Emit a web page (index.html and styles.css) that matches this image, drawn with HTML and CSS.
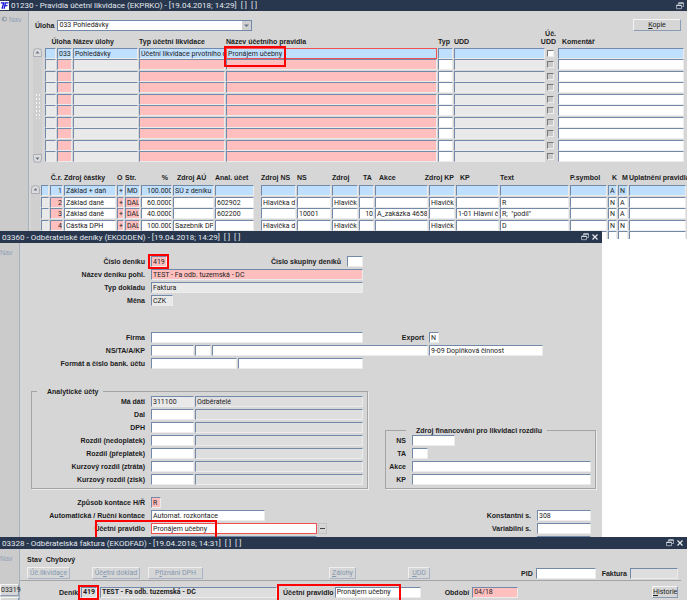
FILE: index.html
```html
<!DOCTYPE html>
<html lang="cs">
<head>
    <meta charset="utf-8">
    <title>Pravidla účetní likvidace</title>
    <link rel="stylesheet" href="styles.css">
</head>
<body>
    <svg class="defs" aria-hidden="true">
        <symbol id="icon-restore" viewBox="0 0 8 8">
            <path d="M2.500 2.500V1h5v3.500H5.800M.5 3.300h5v3.400h-5z" fill="none" stroke="#b4bcc9" stroke-width=".8"/>
            <path d="M2.500 1h5M.5 3.300h5" stroke="#e6eaf0"/>
        </symbol>
        <symbol id="icon-close" viewBox="0 0 8 8">
            <path d="M1.500 1.500l5 5M6.500 1.500l-5 5" stroke="#e6eaf0" stroke-width="1.200"/>
        </symbol>
        <symbol id="icon-up" viewBox="0 0 9 9">
            <path d="M.5 8.500V4a4 3.500 0 0 1 8 0v4.500z" fill="#dcdcdc" stroke="#a9aeb6"/>
            <path d="M2.500 5.500h4l-2-2.500z" fill="#66758c"/>
        </symbol>
        <symbol id="icon-down" viewBox="0 0 9 9">
            <path d="M.5.5V5a4 3.500 0 0 0 8 0V.5z" fill="#dcdcdc" stroke="#a9aeb6"/>
            <path d="M2.500 3.500h4l-2 2.500z" fill="#66758c"/>
        </symbol>
    </svg>

    <!-- Pravidla účetní likvidace -->
    <section class="window rules">
        <header class="titlebar">
            <svg class="logo" viewBox="0 0 9 9" aria-hidden="true">
                <rect width="9" height="9" fill="#fff"/>
                <path d="M.8 1.800h3L2 7.800M4 7.800l1.500-6h3M4.800 4.600h2.700" fill="none" stroke="#1414d8" stroke-width="1.300"/>
            </svg>
            <h1>01230 - Pravidla účetní likvidace (EKPRKO) - [19.04.2018; 14:29]&nbsp; [ ]&nbsp; [ ]</h1>
            <svg class="win-icon" aria-hidden="true"><use href="#icon-restore"/></svg>
        </header>
        <div class="window-body">
            <nav class="side wide">
                <svg class="nav-icon" viewBox="0 0 6 6" aria-hidden="true">
                    <circle cx="3" cy="3" r="2.500" fill="#a3a9b3"/>
                    <path d="M2.500 1.800h3v2.500h-3z" fill="#d5d9df" stroke="#838b98" stroke-width=".6"/>
                </svg>
                <span>Nav</span>
            </nav>
            <main class="rules-main">
                <div class="toolbar">
                    <label for="uloha">Úloha</label>
                    <div class="combo">
                        <select id="uloha"><option>033 Pohledávky</option></select>
                        <svg viewBox="0 0 9 9" aria-hidden="true"><path d="M2 3.500h5l-2.500 2.500z" fill="#66758c"/></svg>
                    </div>
                    <button class="btn kopie"><u>K</u>opie</button>
                </div>

                <div class="grid-wrap">
                    <div class="scroll">
                        <svg aria-hidden="true"><use href="#icon-up"/></svg>
                        <div class="grip"></div>
                        <svg aria-hidden="true"><use href="#icon-down"/></svg>
                    </div>
                    <table class="grid" id="rules-grid">
                        <colgroup>
                            <col class="w12"><col class="w16"><col class="w66"><col class="w87"><col class="w212">
                            <col class="w16"><col class="w92"><col class="w12"><col>
                        </colgroup>
                        <thead>
                            <tr>
                                <th></th>
                                <th class="right"><bdi>Úloha</bdi></th>
                                <th>Název úlohy</th>
                                <th>Typ účetní likvidace</th>
                                <th>Název účetního pravidla</th>
                                <th>Typ</th>
                                <th>UDD</th>
                                <th class="right"><bdi>Úč.</bdi><br><bdi>UDD</bdi></th>
                                <th class="indent">Komentář</th>
                            </tr>
                        </thead>
                        <tbody></tbody>
                    </table>
                </div>

                <div class="grid-wrap lower">
                    <div class="scroll">
                        <svg aria-hidden="true"><use href="#icon-up"/></svg>
                    </div>
                    <table class="grid" id="items-grid">
                        <colgroup>
                            <col class="w9"><col class="w14"><col class="w53"><col class="w8"><col class="w16"><col class="w32">
                            <col class="w42"><col class="w46"><col class="w36"><col class="w35"><col class="w27"><col class="w16">
                            <col class="w54"><col class="w27"><col class="w44"><col class="w70"><col class="w38"><col class="w10">
                            <col class="w11"><col>
                        </colgroup>
                        <thead>
                            <tr>
                                <th></th>
                                <th class="right"><bdi>Č.r.</bdi></th>
                                <th>Zdroj částky</th>
                                <th>O</th>
                                <th>Str.</th>
                                <th class="right pct">%</th>
                                <th class="indent">Zdroj AÚ</th>
                                <th>Anal. účet</th>
                                <th>Zdroj NS</th>
                                <th>NS</th>
                                <th>Zdroj</th>
                                <th class="indent">TA</th>
                                <th class="indent">Akce</th>
                                <th class="right"><bdi>Zdroj KP</bdi></th>
                                <th class="indent">KP</th>
                                <th>Text</th>
                                <th>P.symbol</th>
                                <th class="indent">K</th>
                                <th class="indent">M</th>
                                <th>Uplatnění pravidla</th>
                            </tr>
                        </thead>
                        <tbody></tbody>
                    </table>
                </div>
            </main>
        </div>
    </section>

    <!-- Odběratelské deníky -->
    <section class="window journals">
        <header class="titlebar">
            <h2>03360 - Odběratelské deníky (EKODDEN) - [19.04.2018; 14:29]&nbsp; [ ]&nbsp; [ ]</h2>
            <svg class="win-icon" aria-hidden="true"><use href="#icon-restore"/></svg>
            <svg class="win-icon" aria-hidden="true"><use href="#icon-close"/></svg>
        </header>
        <div class="window-body">
            <nav class="side"><span>Nav</span></nav>
            <div class="journals-main">
                <div class="rows">
                    <div class="row">
                        <label for="cislo">Číslo deníku</label>
                        <span class="marked mark-code"><input id="cislo" class="w16 req" value="419"></span>
                        <label class="group-label" for="skupina">Číslo skupiny deníků</label>
                        <input id="skupina" class="w16">
                    </div>
                    <div class="row">
                        <label for="nazev">Název deníku pohl.</label>
                        <input id="nazev" class="w212 req" value="TEST - Fa odb. tuzemská - DČ">
                    </div>
                    <div class="row">
                        <label for="typ">Typ dokladu</label>
                        <input id="typ" class="w212 ro" value="Faktura" readonly>
                    </div>
                    <div class="row">
                        <label for="mena">Měna</label>
                        <input id="mena" class="w22 ro" value="CZK" readonly>
                    </div>
                </div>

                <div class="rows spaced">
                    <div class="row">
                        <label for="firma">Firma</label>
                        <input id="firma" class="w212">
                        <label class="export-label" for="export">Export</label>
                        <input id="export" class="w10" value="N">
                    </div>
                    <div class="row">
                        <label for="ns">NS/TA/A/KP</label>
                        <input id="ns" class="w43">
                        <input class="w16" aria-label="TA">
                        <input class="w216" aria-label="A">
                        <input class="w114" aria-label="KP" value="9-09 Doplňková činnost">
                    </div>
                    <div class="row">
                        <label for="ucet">Formát a číslo bank. účtu</label>
                        <input id="ucet" class="w86">
                        <input class="w125" aria-label="Číslo účtu">
                    </div>
                </div>

                <div class="groups">
                    <fieldset class="accounts">
                        <legend>Analytické účty</legend>
                        <div class="rows">
                            <div class="row"><label for="madati">Má dáti</label><input id="madati" class="w43 ro" value="311100" readonly><input class="fill off" aria-label="Název" value="Odběratelé" readonly></div>
                            <div class="row"><label for="dal">Dal</label><input id="dal" class="w43"><input class="fill off" aria-label="Název" readonly></div>
                            <div class="row"><label for="dph">DPH</label><input id="dph" class="w43"><input class="fill off" aria-label="Název" readonly></div>
                            <div class="row"><label for="nedo">Rozdíl (nedoplatek)</label><input id="nedo" class="w43"><input class="fill off" aria-label="Název" readonly></div>
                            <div class="row"><label for="prep">Rozdíl (přeplatek)</label><input id="prep" class="w43"><input class="fill off" aria-label="Název" readonly></div>
                            <div class="row"><label for="ztrata">Kurzový rozdíl (ztráta)</label><input id="ztrata" class="w43"><input class="fill off" aria-label="Název" readonly></div>
                            <div class="row"><label for="zisk">Kurzový rozdíl (zisk)</label><input id="zisk" class="w43"><input class="fill off" aria-label="Název" readonly></div>
                        </div>
                    </fieldset>
                    <fieldset class="funding">
                        <legend>Zdroj financování pro likvidaci rozdílu</legend>
                        <div class="rows">
                            <div class="row"><label for="f-ns">NS</label><input id="f-ns" class="w43"></div>
                            <div class="row"><label for="f-ta">TA</label><input id="f-ta" class="w16"></div>
                            <div class="row"><label for="f-akce">Akce</label><input id="f-akce" class="fill"></div>
                            <div class="row"><label for="f-kp">KP</label><input id="f-kp" class="fill"></div>
                        </div>
                    </fieldset>
                </div>

                <div class="posting">
                    <div class="rows">
                        <div class="row">
                            <label for="zpusob">Způsob kontace H/Ř</label>
                            <input id="zpusob" class="w10 req" value="R">
                        </div>
                        <div class="row">
                            <label for="auto">Automatická / Ruční kontace</label>
                            <input id="auto" class="w114" value="Automat. rozkontace">
                        </div>
                        <div class="row marked mark-rule">
                            <label for="pravidlo">Účetní pravidlo</label>
                            <input id="pravidlo" class="w166 focus" value="Pronájem učebny">
                            <button class="more" aria-label="Výběr"></button>
                        </div>
                        <div class="row">
                            <label></label>
                            <input class="w166 off" aria-label="Popis pravidla" readonly>
                        </div>
                    </div>
                    <div class="rows symbols">
                        <div class="row"><label for="ks">Konstantní s.</label><input id="ks" class="w54" value="308"></div>
                        <div class="row"><label for="vs">Variabilní s.</label><input id="vs" class="w54"></div>
                        <div class="row"><label></label><input class="w54" aria-label="Specifický s."></div>
                    </div>
                </div>
            </div>
        </div>
    </section>

    <!-- Odběratelská faktura -->
    <section class="window invoice">
        <header class="titlebar">
            <h2>03328 - Odběratelská faktura (EKODFAD) - [19.04.2018; 14:31]&nbsp; [ ]&nbsp; [ ]</h2>
            <svg class="win-icon" aria-hidden="true"><use href="#icon-restore"/></svg>
            <svg class="win-icon" aria-hidden="true"><use href="#icon-close"/></svg>
        </header>
        <div class="window-body">
            <nav class="side">
                <span>Nav</span>
                <button class="btn side-btn">03319</button>
                <button class="btn side-btn" aria-label="Další doklad"></button>
            </nav>
            <div class="invoice-main">
                <div class="invoice-top">
                    <div>
                        <div class="state">Stav&nbsp; Chybový</div>
                        <div class="actions">
                            <button class="btn w43" disabled>Úč.likvida<u>c</u>e</button>
                            <button class="btn w48" disabled>Úč<u>e</u>tní doklad</button>
                            <button class="btn w55" disabled>P<u>ř</u>iznání DPH</button>
                            <button class="btn w27" disabled><u>Z</u>álohy</button>
                            <button class="btn w22" disabled><u>U</u>DD</button>
                        </div>
                    </div>
                    <div class="ids">
                        <label for="pid">PID</label><input id="pid" class="w60">
                        <label for="faktura">Faktura</label><input id="faktura" class="w48 off" readonly>
                    </div>
                </div>
                <div class="invoice-row">
                    <label for="denik">Deník</label>
                    <span class="marked mark-code"><input id="denik" class="w16 off strong" value="419" readonly></span>
                    <input class="w177 off strong" aria-label="Název deníku" value="TEST - Fa odb. tuzemská - DČ" readonly>
                    <span class="marked mark-field">
                        <label for="f-pravidlo">Účetní pravidlo</label>
                        <input id="f-pravidlo" class="w86" value="Pronájem učebny">
                    </span>
                    <label class="period" for="obdobi">Období</label>
                    <input id="obdobi" class="w46 req" value="04/18">
                    <button class="btn historie"><u>H</u>istorie</button>
                </div>
            </div>
        </div>
    </section>
    <script src="script.js"></script>
</body>
</html>
```

FILE: styles.css
```css
* {
    box-sizing: border-box;
}
body {
    margin: 0;
    height: 100vh;
    overflow: hidden;
    background: #fff;
    color: #1c1c1c;
    font: bold 7px/9px "Liberation Sans", Arial, sans-serif;
}
.defs {
    display: none;
}

/* Windows */
.window {
    position: relative;
    background: #d6d6d6;
}
.titlebar {
    display: flex;
    align-items: center;
    height: 12px;
    padding: 0 3px 0 2px;
    background: #28374d;
    color: #e4e8ee;
}
.titlebar h1,
.titlebar h2 {
    flex: 1;
    margin: 0;
    font: 8px/11px Roboto, "Liberation Sans", sans-serif;
    white-space: nowrap;
}
.logo {
    width: 9px;
    height: 9px;
    margin-right: 2px;
}
.win-icon {
    width: 8px;
    height: 8px;
    margin-left: 2px;
}
.window-body {
    display: flex;
}
.side {
    flex: none;
    width: 20px;
    padding-top: 5px;
    background: #cbcbcb;
    border-right: 1px solid #a7b0bf;
    color: #8fa0b8;
    font-weight: normal;
}
.side.wide {
    width: 29px;
    padding: 4px 0 0 1px;
}
.nav-icon {
    width: 6px;
    height: 6px;
}

/* Controls */
label {
    white-space: nowrap;
}
input,
select {
    display: block;
    height: 11px;
    margin: 0;
    padding: 0 0 0 1px;
    border: 1px solid;
    border-color: #7389a9 #ececec #ececec #7389a9;
    border-radius: 0;
    background: #fff;
    color: #222;
    font: 7px/9px Roboto, "Liberation Sans", sans-serif;
    outline: 0;
}
.req {
    background: #ffbfbf;
}
.ro {
    background: #e9e9e9;
}
.off {
    background: #dedede;
}
.focus {
    border-color: #f05050;
}
.strong {
    font-weight: bold;
}
.btn {
    height: 12px;
    padding: 0;
    border: 1px solid;
    border-color: #f4f4f4 #8a9bb5 #8a9bb5 #f4f4f4;
    background: #d6d6d6;
    color: #1c1c1c;
    font: 7px/9px Roboto, "Liberation Sans", sans-serif;
    white-space: nowrap;
}
.btn:disabled {
    border-color: #efefef #a9b4c6 #a9b4c6 #efefef;
    color: #8496b0;
}

/* Red frames */
.marked {
    position: relative;
}
.marked::after {
    content: "";
    position: absolute;
    border: 2px solid #f00;
    pointer-events: none;
}
.mark-name::after {
    left: -2px;
    top: -2px;
    width: 58px;
    height: 17px;
}
.mark-code::after {
    left: -3px;
    right: -2px;
    top: -2px;
    bottom: -2px;
}
.mark-rule::after {
    left: 64px;
    top: -3px;
    width: 118px;
    height: 17px;
}
.mark-field::after {
    left: -6px;
    top: -3px;
    width: 120px;
    height: 17px;
}

/* Rules window */
.rules .titlebar {
    height: 11px;
    padding-left: 0;
}
.rules-main {
    flex: 1;
    min-width: 0;
    padding: 9px 2px 0;
}
.toolbar {
    display: flex;
    align-items: center;
    height: 10px;
    padding: 0 4px;
}
.combo {
    position: relative;
    width: 195px;
    margin-left: 3px;
}
.combo select {
    width: 100%;
    appearance: none;
    border-color: #7389a9;
}
.combo svg {
    position: absolute;
    right: 1px;
    top: 1px;
    width: 9px;
    height: 9px;
    background: #d0d0d0;
}
.kopie {
    width: 48px;
    margin-left: auto;
}
.grid-wrap {
    display: flex;
    align-items: flex-end;
    gap: 3px;
    padding-left: 2px;
}
.scroll {
    flex: none;
    display: flex;
    flex-direction: column;
    justify-content: space-between;
    width: 9px;
    height: 115px;
    background: #cfcfcf;
}
.scroll svg {
    width: 9px;
    height: 9px;
}
.grip {
    width: 6px;
    height: 26px;
    margin: 0 auto;
    background: radial-gradient(circle, #f4f4f4 1px, transparent 1px) 0 0 / 3px 4px;
}
.grid {
    flex: 1;
    width: 0;
    table-layout: fixed;
    border-spacing: 0;
}
.grid th {
    padding: 0 1px 2px 0;
    line-height: 8px;
    text-align: left;
    vertical-align: bottom;
    white-space: nowrap;
}
.grid th.indent {
    padding-left: 4px;
}
.grid th.right {
    direction: rtl;
    text-align: right;
    padding-right: 2px;
    text-align: start;
}
.grid th.pct {
    padding-right: 5px;
}
.grid td {
    height: 11px;
    padding: 0 1px 0 0;
    vertical-align: top;
}
.grid tbody tr:nth-child(even) td {
    height: 12px;
}
.grid input {
    width: 100%;
}
.grid input.right {
    text-align: right;
}
.grid input.num {
    padding-left: 5px;
}
.grid input[type="checkbox"] {
    appearance: none;
    width: 7px;
    height: 7px;
    margin: 2px 0 0 1px;
    padding: 0;
    background: #c9c9c9;
    border-color: #777 #eee #eee #777;
}
.grid .selected input {
    background: #bfdfff;
}
.grid .selected input[type="checkbox"] {
    background: #fff;
}
.lower {
    align-items: flex-start;
    gap: 1px;
    height: 76px;
    margin-right: -2px;
    padding: 11px 0 0;
    overflow: hidden;
}
.lower .scroll {
    height: 54px;
    margin-top: 11px;
}
.lower .grid th {
    padding-bottom: 3px;
}
.lower .grid tbody tr:nth-child(odd) td {
    height: 12px;
}
.lower .grid tbody tr:nth-child(even) td {
    height: 11px;
}
.lower .grid td:nth-child(8) {
    padding-right: 7px;
}

/* Journals window */
.journals {
    width: calc(100% - 85px);
    margin-top: -8px;
}
.journals-main {
    flex: 1;
    min-width: 0;
    padding: 13px 6px 0 11px;
}
.rows {
    display: flex;
    flex-direction: column;
    gap: 2px;
}
.row {
    display: flex;
    align-items: center;
    gap: 1px;
    height: 11px;
}
.row > label:first-child {
    width: 114px;
    margin-right: 5px;
    text-align: right;
}
.row .group-label {
    width: 173px;
    margin-right: 5px;
    text-align: right;
}
.row .export-label {
    width: 60px;
    margin-right: 4px;
    text-align: right;
}
.spaced {
    margin-top: 26px;
}
.groups {
    display: flex;
    align-items: flex-end;
    justify-content: space-between;
    margin-top: 18px;
}
fieldset {
    min-width: 0;
    margin: 0;
    padding: 0 4px 3px 0;
    border: 1px solid #a4a4a4;
    box-shadow: 1px 1px #ececec;
}
legend {
    margin-left: 5px;
    padding: 0 5px 0 10px;
}
.accounts {
    width: 337px;
}
.accounts .row > label:first-child {
    width: 113px;
}
.fill {
    flex: 1;
    min-width: 0;
}
.funding {
    width: 211px;
}
.funding legend {
    margin-left: 20px;
}
.funding .row > label:first-child {
    width: 20px;
}
.posting {
    display: flex;
    align-items: flex-end;
    justify-content: space-between;
    margin-top: 8px;
}
.symbols {
    padding-right: 5px;
}
.more {
    width: 9px;
    height: 11px;
    padding: 0;
    border: 1px solid #c4c4c4;
    background: linear-gradient(#444, #444) center / 5px 1px no-repeat #d6d6d6;
}

/* Invoice window */
.invoice {
    height: 70px;
    margin-top: -10px;
}
.invoice .side {
    height: 60px;
}
.invoice .side span {
    display: block;
}
.side-btn {
    display: block;
    width: 19px;
    height: 12px;
    margin-top: 1px;
}
.side span + .side-btn {
    margin-top: 21px;
}
.invoice-main {
    flex: 1;
    min-width: 0;
    padding: 6px 6px 0 0;
}
.invoice-top {
    display: flex;
    align-items: flex-end;
    justify-content: space-between;
    padding: 0 3px 1px 7px;
    border-bottom: 1px solid #a4a4a4;
}
.actions {
    display: flex;
    margin-top: 3px;
}
.actions .btn:nth-child(2) {
    margin-left: 22px;
}
.actions .btn:nth-child(3) {
    margin-left: 8px;
}
.actions .btn:nth-child(4) {
    margin-left: 126px;
}
.actions .btn:nth-child(5) {
    margin-left: 52px;
}
.ids {
    display: flex;
    align-items: center;
    gap: 3px;
}
.ids input + label {
    margin-left: 3px;
}
.invoice-row {
    display: flex;
    align-items: center;
    margin-top: 5px;
    padding: 0 3px 0 39px;
}
.invoice-row > .mark-code {
    margin: 0 3px 0 3px;
}
.mark-field {
    display: flex;
    align-items: center;
    gap: 1px;
    margin-left: 6px;
}
.period {
    margin: 0 3px 0 24px;
}
.historie {
    width: 26px;
    margin-left: auto;
}

/* Shared widths */
.w8 { width: 8px; }
.w9 { width: 9px; }
.w10 { width: 10px; }
.w11 { width: 11px; }
.w12 { width: 12px; }
.w14 { width: 14px; }
.w16 { width: 16px; }
.w22 { width: 22px; }
.w27 { width: 27px; }
.w32 { width: 32px; }
.w35 { width: 35px; }
.w36 { width: 36px; }
.w38 { width: 38px; }
.w42 { width: 42px; }
.w43 { width: 43px; }
.w44 { width: 44px; }
.w46 { width: 46px; }
.w48 { width: 48px; }
.w53 { width: 53px; }
.w54 { width: 54px; }
.w55 { width: 55px; }
.w60 { width: 60px; }
.w66 { width: 66px; }
.w70 { width: 70px; }
.w86 { width: 86px; }
.w87 { width: 87px; }
.w92 { width: 92px; }
.w114 { width: 114px; }
.w125 { width: 125px; }
.w166 { width: 166px; }
.w177 { width: 177px; }
.w212 { width: 212px; }
.w216 { width: 216px; }
```

FILE: script.js
```js
// Column setup: css class per field, "check" draws a tick box
const rulesCols = ['ro', 'req', 'ro', 'req', 'req', '', 'ro', 'check', ''];
const itemsCols = ['ro', 'req right', '', 'req', 'req', 'num', '', '', '', '', '', 'right', '', '', '', '', '', '', '', ''];

const rules = [['', '033', 'Pohledávky', 'Účetní likvidace prvotního dokladu', 'Pronájem učebny']];
while (rules.length < 10) rules.push([]);

const items = [
    ['', '1', 'Základ + daň', '+', 'MD', '100.0000', 'SÚ z deníku', '', '', '', '', '', '', '', '', '', '', 'A', 'N'],
    ['', '2', 'Základ daně', '+', 'DAL', '60.0000', '', '602902', 'Hlavička dokladu', '', 'Hlavička', '', '', 'Hlavička', '', 'R', '', 'N', 'A'],
    ['', '3', 'Základ daně', '+', 'DAL', '40.0000', '', '602200', '', '10001', '', '10', 'A_zakázka 4658', '', '1-01 Hlavní činnost', 'R;  "podíl"', '', 'N', 'A'],
    ['', '4', 'Částka DPH', '+', 'DAL', '100.0000', 'Sazebník DPH', '', 'Hlavička dokladu', '', 'Hlavička', '', '', 'Hlavička', '', 'D', '', 'N', 'N'],
    []
];

function fillGrid(id, cols, rows) {
    const table = document.getElementById(id);
    const heads = table.querySelectorAll('th');
    rows.forEach((row, r) => {
        const tr = table.tBodies[0].insertRow();
        if (r === 0) tr.className = 'selected';
        cols.forEach((cls, c) => {
            const td = tr.insertCell();
            const input = document.createElement('input');
            input.setAttribute('aria-label', heads[c].textContent || 'Řádek');
            if (cls === 'check') {
                input.type = 'checkbox';
            } else {
                input.className = cls;
                input.value = row[c] || '';
            }
            td.appendChild(input);
        });
    });
}

fillGrid('rules-grid', rulesCols, rules);
fillGrid('items-grid', itemsCols, items);

// Edited rule name
const nameCell = document.querySelector('#rules-grid .selected td:nth-child(5)');
nameCell.classList.add('marked', 'mark-name');
nameCell.firstChild.classList.add('focus');
```
